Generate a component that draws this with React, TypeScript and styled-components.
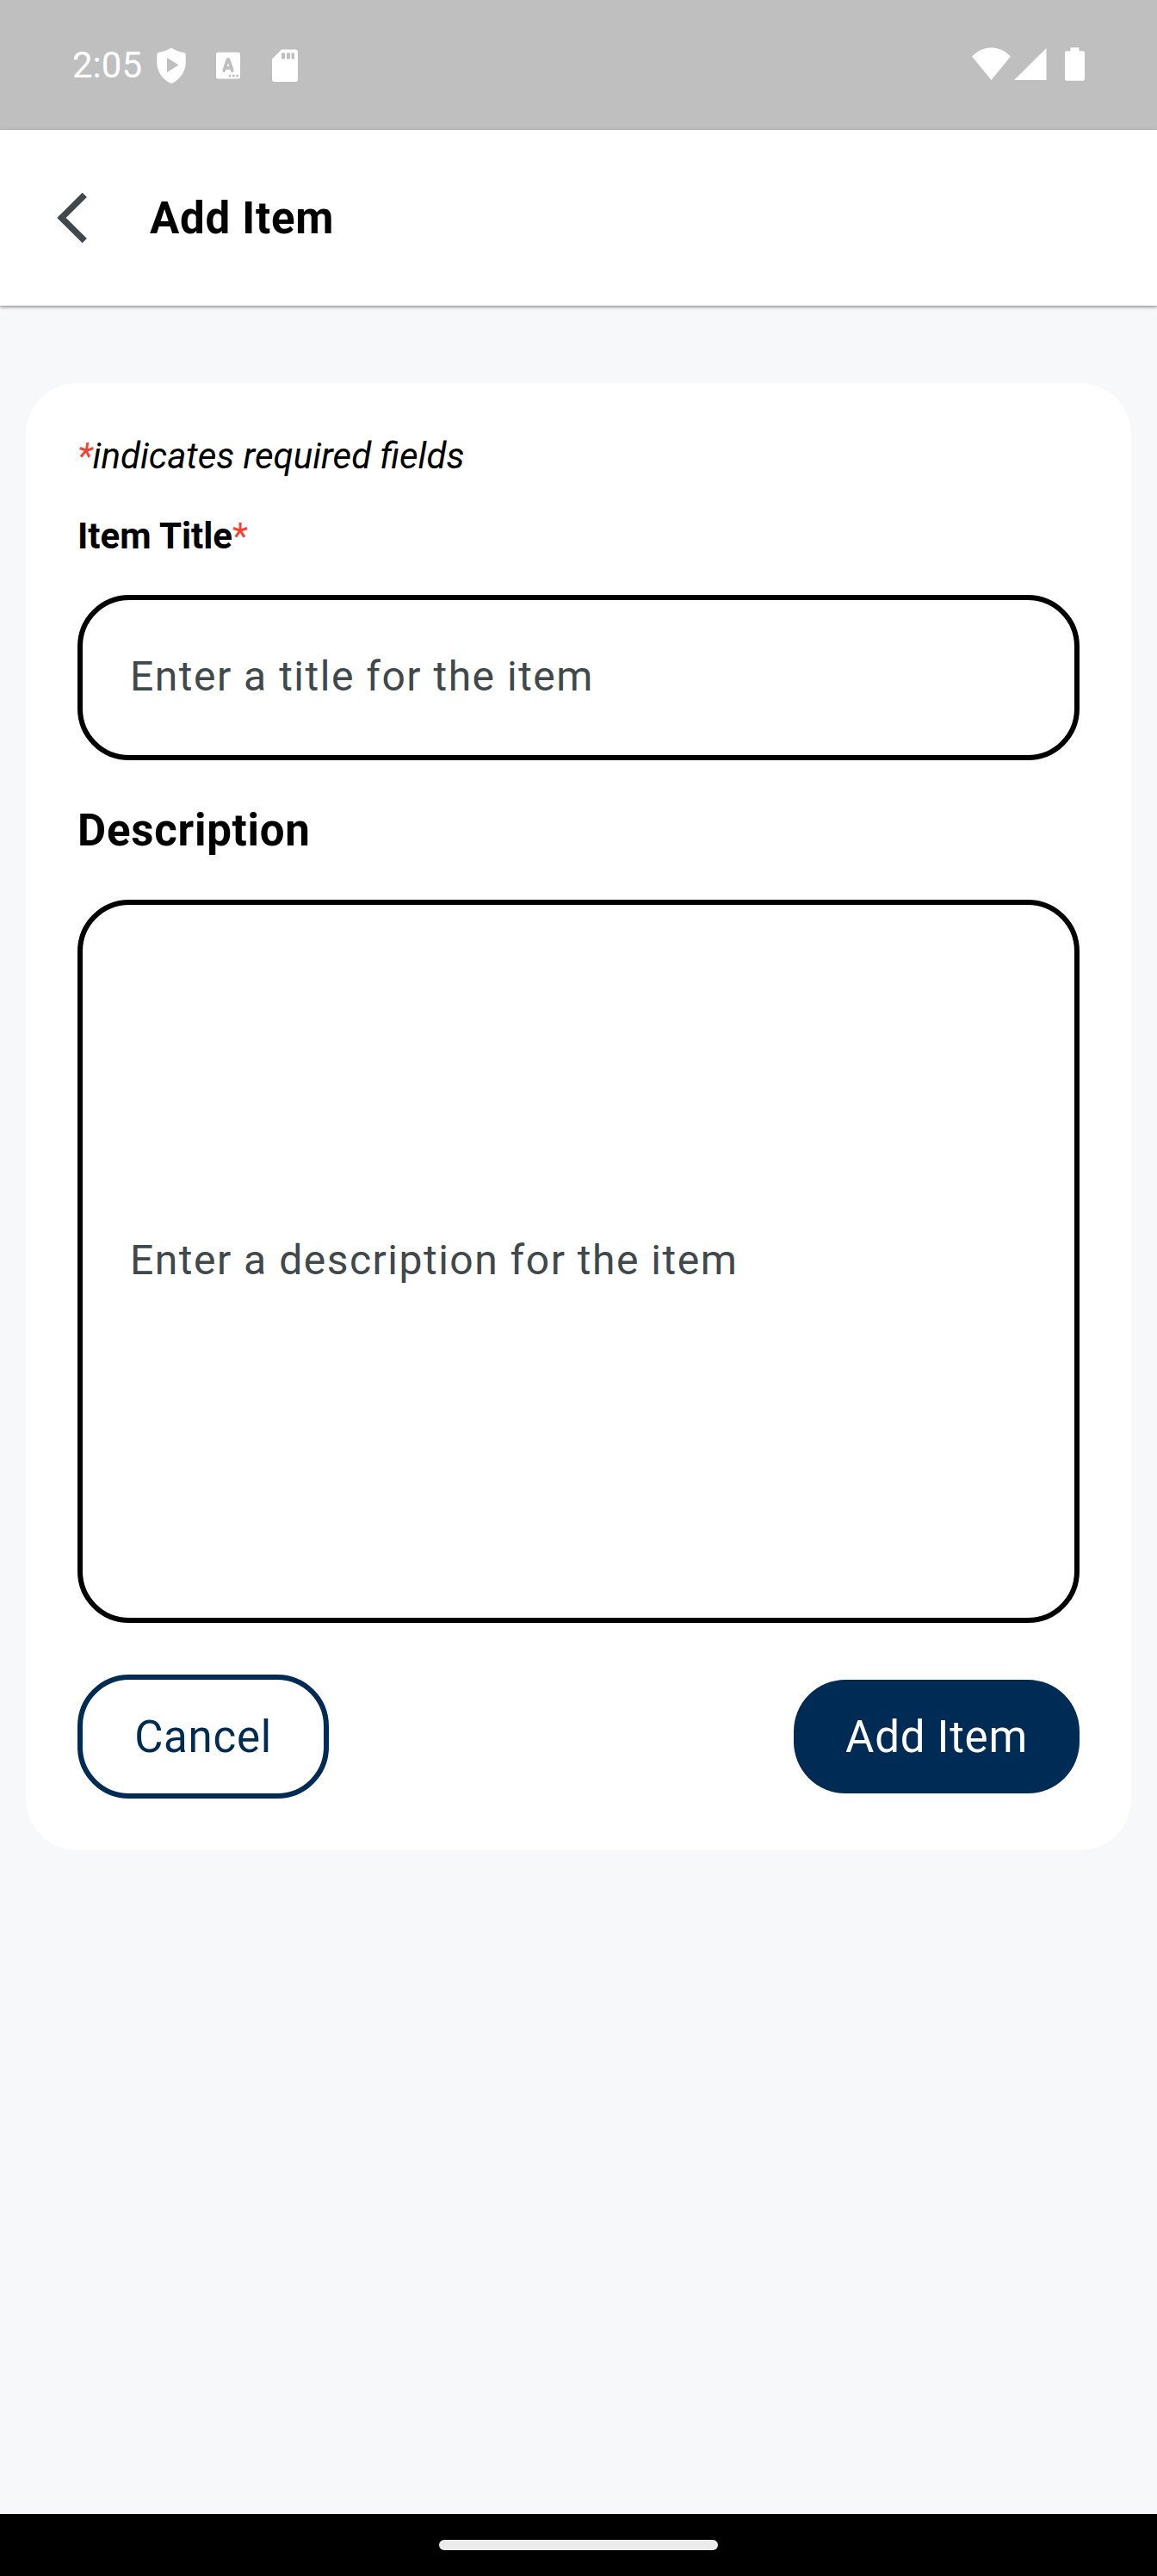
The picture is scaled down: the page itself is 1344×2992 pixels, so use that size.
import React from "react";
import styled, { createGlobalStyle } from "styled-components";

const GlobalStyle = createGlobalStyle`
  *, *::before, *::after { box-sizing: border-box; }
  body { margin: 0; background: #f7f8fa; }
  input, textarea, button { font-family: Roboto, sans-serif; margin: 0; }
`;

const Screen = styled.div`
  display: flex;
  flex-direction: column;
  width: 1344px;
  height: 2992px;
  background: #f7f8fa;
  font-family: Roboto, sans-serif;
  color: #000;
`;

const StatusBar = styled.div`
  display: flex;
  justify-content: space-between;
  height: 151px;
  flex: none;
  padding: 0 82px 0 84px;
  background: #bfbfbf;
  color: #fff;
`;

const StatusGroup = styled.div<{ $lift?: number }>`
  display: flex;
  align-items: center;
  padding-bottom: ${(p) => p.$lift ?? 0}px;
`;

const Clock = styled.span`
  font-size: 42px;
  line-height: 49px;
  width: 98px;
`;

const AppBar = styled.header`
  display: flex;
  align-items: center;
  height: 204px;
  flex: none;
  padding: 0 0 0 66px;
  background: #fff;
  box-shadow: 0 2px 3px rgba(0, 0, 0, 0.3), 0 1px 6px rgba(0, 0, 0, 0.12);
`;

const BackButton = styled.button`
  display: flex;
  width: 108px;
  padding: 0;
  border: 0;
  background: none;
`;

const Title = styled.h1`
  margin: 0;
  padding-top: 1px;
  font-size: 51px;
  line-height: 60px;
  font-weight: 700;
  letter-spacing: 0.75px;
`;

const Body = styled.main`
  flex: 1;
  padding: 90px 30px 0;
`;

const Card = styled.form`
  display: flex;
  flex-direction: column;
  height: 1704px;
  padding: 60px;
  border-radius: 60px;
  background: #fff;
`;

const RequiredNote = styled.p`
  margin: 0;
  font-size: 42px;
  line-height: 50px;
  font-style: italic;
`;

const Star = styled.span`
  color: #f44336;
  font-weight: 400;
`;

const TitleLabel = styled.label`
  margin-top: 43px;
  font-size: 42px;
  line-height: 50px;
  font-weight: 700;
`;

const DescriptionLabel = styled.label`
  margin-top: 52px;
  font-size: 51px;
  line-height: 60px;
  font-weight: 700;
  letter-spacing: 0.75px;
`;

const Field = styled.input<{ $height: number; $gap: number }>`
  width: 100%;
  height: ${(p) => p.$height}px;
  margin-top: ${(p) => p.$gap}px;
  padding: 0 55px 3px;
  border: 6px solid #000;
  border-radius: 60px;
  background: #fff;
  outline: none;
  font-size: 48px;
  line-height: 57px;
  letter-spacing: 1.5px;
  &::placeholder { color: #40484b; opacity: 1; }
`;

const Actions = styled.div`
  display: flex;
  align-items: center;
  justify-content: space-between;
  margin-top: 60px;
`;

const ActionButton = styled.button<{ $filled?: boolean }>`
  width: ${(p) => (p.$filled ? 332 : 292)}px;
  height: ${(p) => (p.$filled ? 132 : 144)}px;
  padding: 1px 0 0;
  border: ${(p) => (p.$filled ? "0" : "6px solid #002b54")};
  border-radius: 60px;
  background: ${(p) => (p.$filled ? "#002b54" : "#fff")};
  color: ${(p) => (p.$filled ? "#fff" : "#002b54")};
  font-size: 51px;
  line-height: 59px;
  letter-spacing: 0.75px;
`;

const NavBar = styled.footer`
  display: flex;
  justify-content: center;
  height: 72px;
  flex: none;
  padding-top: 30px;
  background: #000;
`;

const NavHandle = styled.div`
  width: 324px;
  height: 12px;
  border-radius: 6px;
  background: #ebebeb;
`;

const NotificationIcons = () => (
  <svg width="170" height="50" viewBox="0 0 170 50" fill="#fff">
    <path
      fillRule="evenodd"
      d="M17 4.500C22 8 28 9.500 32 10q1.700.5 1.700 2.500V22C33.700 33 26 42.500 17 46C8 42.500 .3 33 .3 22V12.500Q.3 10.500 2 10C7 9.500 12 7.500 17 4.500ZM12 16V33L25.500 24.500Z"
    />
    <rect x="69" y="9.700" width="28" height="30.800" rx="2.500" />
    <path d="M78.200 31L82.300 18.200H83.700L87.800 31M79.800 27.800H86.200" fill="none" stroke="#bfbfbf" strokeWidth="3.700" strokeLinecap="round" strokeLinejoin="round" />
    <circle cx="85" cy="37" r="1.500" fill="#bfbfbf" />
    <circle cx="89.300" cy="37" r="1.500" fill="#bfbfbf" />
    <circle cx="93.700" cy="37" r="1.500" fill="#bfbfbf" />
    <path d="M145 6.500H161Q164 6.500 164 9.500V41Q164 44 161 44H137Q134 44 134 41V17.500Z" />
    <path d="M145 10.500H149V17.500H145ZM151 10.500H155V17.500H151ZM156.500 10.500H160V17.500H156.500Z" fill="#bfbfbf" />
  </svg>
);

const SystemIcons = () => (
  <svg width="134" height="44" viewBox="0 0 134 44" fill="#fff">
    <path d="M1 13.500Q11 3.300 23.500 3.300T46 13.500L23.500 41Z" />
    <path d="M50 41H87.500V4Z" />
    <path d="M115.500 3.200H125.500V7.300H130Q132 7.300 132 9.500V39.500Q132 41.700 130 41.700H111.300Q109 41.700 109 39.500V9.500Q109 7.300 111.300 7.300H115.500Z" />
  </svg>
);

const ChevronIcon = () => (
  <svg width="36" height="60" viewBox="0 0 36 60">
    <path d="M32.300 3.300L5.500 30L32.300 56.700" fill="none" stroke="#40484b" strokeWidth="7.400" />
  </svg>
);

export default function App() {
  return (
    <Screen>
      <GlobalStyle />
      <StatusBar>
        <StatusGroup>
          <Clock>2:05</Clock>
          <NotificationIcons />
        </StatusGroup>
        <StatusGroup $lift={3}>
          <SystemIcons />
        </StatusGroup>
      </StatusBar>
      <AppBar>
        <BackButton type="button" aria-label="Back">
          <ChevronIcon />
        </BackButton>
        <Title>Add Item</Title>
      </AppBar>
      <Body>
        <Card>
          <RequiredNote>
            <Star>*</Star>indicates required fields
          </RequiredNote>
          <TitleLabel htmlFor="title">
            Item Title<Star>*</Star>
          </TitleLabel>
          <Field id="title" $height={192} $gap={43} placeholder="Enter a title for the item" />
          <DescriptionLabel htmlFor="description">Description</DescriptionLabel>
          <Field id="description" $height={840} $gap={50} placeholder="Enter a description for the item" />
          <Actions>
            <ActionButton type="button">Cancel</ActionButton>
            <ActionButton type="button" $filled>
              Add Item
            </ActionButton>
          </Actions>
        </Card>
      </Body>
      <NavBar>
        <NavHandle />
      </NavBar>
    </Screen>
  );
}
